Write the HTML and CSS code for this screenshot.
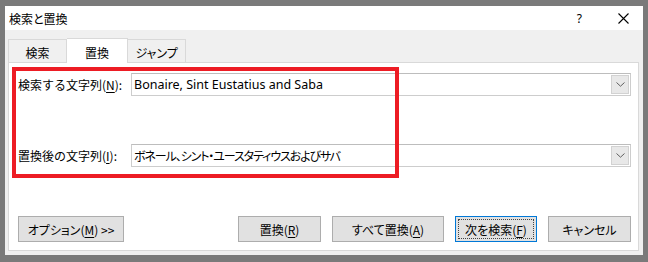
FILE: index.html
```html
<!DOCTYPE html>
<html lang="ja">
<head>
    <meta charset="UTF-8">
    <meta name="viewport" content="width=device-width, initial-scale=1.0">
    <title>検索と置換</title>
    <link rel="stylesheet" href="styles.css">
</head>
<body>
    <div class="dialog">
        <div class="titlebar">
            <span class="title">検索と置換</span>
            <div class="caption-btns">
                <span class="help">?</span>
                <svg class="close" width="11" height="11" viewBox="0 0 11 11">
                    <path d="M0.5 0.5 L10.5 10.5 M10.5 0.5 L0.5 10.5" stroke="#000" stroke-width="1.1" fill="none"/>
                </svg>
            </div>
        </div>

        <div class="content">
            <div class="tabs">
                <div class="tab tab-find">検索</div>
                <div class="tab tab-replace active">置換</div>
                <div class="tab tab-jump">ジャンプ</div>
            </div>

            <div class="panel">
                <div class="highlight"></div>

                <div class="field-row">
                    <label class="field-label">検索する文字列(<u>N</u>):</label>
                    <div class="combo">
                        <span class="combo-text latin">Bonaire, Sint Eustatius and Saba</span>
                        <span class="combo-btn">
                            <svg width="9" height="5" viewBox="0 0 9 5"><path d="M0.5 0.5 L4.5 4.2 L8.5 0.5" stroke="#606060" stroke-width="1" fill="none"/></svg>
                        </span>
                    </div>
                </div>

                <div class="field-row second">
                    <label class="field-label">置換後の文字列(<u>I</u>):</label>
                    <div class="combo">
                        <span class="combo-text kana">ボネール、シント・ユースタティウスおよびサバ</span>
                        <span class="combo-btn">
                            <svg width="9" height="5" viewBox="0 0 9 5"><path d="M0.5 0.5 L4.5 4.2 L8.5 0.5" stroke="#606060" stroke-width="1" fill="none"/></svg>
                        </span>
                    </div>
                </div>

                <div class="button-row">
                    <button class="btn btn-options">オプション(<u>M</u>) &gt;&gt;</button>
                    <div class="btn-group">
                        <button class="btn btn-replace">置換(<u>R</u>)</button>
                        <button class="btn btn-replace-all">すべて置換(<u>A</u>)</button>
                        <button class="btn btn-next default"><span class="focus-ring">次を検索(<u>F</u>)</span></button>
                        <button class="btn btn-cancel">キャンセル</button>
                    </div>
                </div>
            </div>
        </div>
    </div>
</body>
</html>
```

FILE: styles.css
```css
* {
    box-sizing: border-box;
    font-family: "Noto Sans CJK JP", "Noto Sans", sans-serif;
}

body {
    margin: 0;
    padding: 6px 0 0 5px;
    width: 648px;
    height: 262px;
    overflow: hidden;
    background-color: #7a7a7a;
}

.dialog {
    width: 638px;
    height: 249px;
    background-color: #f0f0f0;
    display: flex;
    flex-direction: column;
}

.titlebar {
    height: 24px;
    background-color: white;
    display: flex;
    align-items: center;
    padding-left: 4px;
    padding-right: 14px;
}

.title {
    font-size: 12px;
    color: #000;
    font-feature-settings: "palt";
}

.caption-btns {
    margin-left: auto;
    display: flex;
    align-items: center;
    gap: 36px;
}

.help {
    font-family: "Noto Sans", sans-serif;
    font-size: 12px;
    color: #000;
}

.content {
    flex: 1;
    display: flex;
    flex-direction: column;
    padding: 8px 4px 4px 3px;
}

.tabs {
    display: flex;
    height: 24px;
}

.tab {
    font-size: 12px;
    color: #000;
    display: flex;
    align-items: center;
    justify-content: center;
    background-color: #f0f0f0;
    border: 1px solid #d9d9d9;
    border-bottom: none;
    margin-top: 1px;
    padding-top: 2px;
}

.tab + .tab {
    border-left: none;
}

.tab-find {
    width: 59px;
}

.tab-replace {
    width: 61px;
}

.tab-jump {
    width: 58px;
    font-feature-settings: "palt";
}

.tab.active {
    background-color: white;
    margin-top: 0;
    margin-bottom: -1px;
    position: relative;
    z-index: 1;
}

.panel {
    flex: 1;
    position: relative;
    background-color: white;
    border: 1px solid #d9d9d9;
    display: flex;
    flex-direction: column;
    padding: 10px 7px 8px 9px;
}

/* red annotation frame drawn over the two fields */
.highlight {
    position: absolute;
    left: 3px;
    top: 4px;
    width: 387px;
    height: 111px;
    border: 4px solid #ed1c24;
}

.field-row {
    display: flex;
    align-items: center;
    height: 23px;
}

.field-row.second {
    margin-top: 48px;
}

.field-label {
    width: 113px;
    font-size: 12px;
    color: #000;
    white-space: nowrap;
}

u {
    text-underline-offset: 2px;
}

.combo {
    flex: 1;
    height: 23px;
    display: flex;
    align-items: center;
    border: 1px solid #cdcdcd;
    border-top-color: #bdbdbd;
    padding-left: 2px;
    padding-right: 1px;
}

.combo-text {
    flex: 1;
    font-size: 12px;
    color: #000;
    white-space: nowrap;
}

.combo-text.latin {
    font-family: "Noto Sans", sans-serif;
    font-size: 12.5px;
}

.combo-text.kana {
    font-feature-settings: "palt";
    letter-spacing: -1.1px;
}

.combo-btn {
    width: 18px;
    height: 19px;
    display: flex;
    align-items: center;
    justify-content: center;
    background-color: #e8e8e8;
    border: 1px solid #d2d2d2;
}

.button-row {
    margin-top: auto;
    display: flex;
    align-items: center;
}

.btn-group {
    margin-left: auto;
    display: flex;
    gap: 11px;
}

.btn {
    height: 26px;
    padding: 0;
    font-size: 12px;
    color: #000;
    background-color: #e1e1e1;
    border: 1px solid #adadad;
    font-feature-settings: "palt";
    display: flex;
    align-items: center;
    justify-content: center;
}

.btn-options {
    width: 106px;
}

.btn-replace {
    width: 83px;
}

.btn-replace-all {
    width: 112px;
}

.btn-next {
    width: 82px;
}

.btn-cancel {
    width: 83px;
}

.btn.default {
    border: 1px solid #0078d7;
    padding: 2px;
}

.focus-ring {
    width: 100%;
    height: 100%;
    display: flex;
    align-items: center;
    justify-content: center;
    border: 1px dotted #444;
}
```
